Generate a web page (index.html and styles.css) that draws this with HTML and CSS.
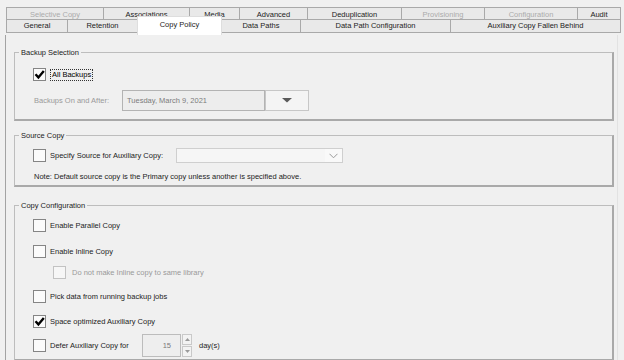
FILE: index.html
```html
<!DOCTYPE html>
<html lang="en">
<head>
    <meta charset="UTF-8">
    <title>Copy Policy</title>
    <link rel="stylesheet" href="styles.css">
</head>
<body>
    <div class="tabs">
        <div class="tab-row back">
            <div class="tab off t-selective">Selective Copy</div>
            <div class="tab t-assoc">Associations</div>
            <div class="tab t-media">Media</div>
            <div class="tab t-advanced">Advanced</div>
            <div class="tab t-dedup">Deduplication</div>
            <div class="tab off t-prov">Provisioning</div>
            <div class="tab off t-config">Configuration</div>
            <div class="tab t-audit">Audit</div>
        </div>
        <div class="tab-row front">
            <div class="tab t-general">General</div>
            <div class="tab t-retention">Retention</div>
            <div class="tab active t-policy">Copy Policy</div>
            <div class="tab t-paths">Data Paths</div>
            <div class="tab t-pathconf">Data Path Configuration</div>
            <div class="tab t-fallen">Auxiliary Copy Fallen Behind</div>
        </div>
    </div>

    <main class="panel">
        <fieldset class="group" id="backup-selection">
            <legend>Backup Selection</legend>
            <div class="group-body">
                <div class="row">
                    <span class="box">
                        <svg viewBox="0 0 13 13" width="13" height="13"><path d="M2.5 6.3 L5.4 9.4 L10.8 3" fill="none" stroke="#000" stroke-width="2.4"/></svg>
                    </span>
                    <span class="label focus">All Backups</span>
                </div>
                <div class="row second">
                    <span class="label muted date-label">Backups On and After:</span>
                    <span class="date-input">Tuesday, March 9, 2021</span>
                    <span class="date-btn">
                        <svg viewBox="0 0 10 5" width="10" height="5"><polygon points="0,0 10,0 5,4.5" fill="#5a5a5a"/></svg>
                    </span>
                </div>
            </div>
        </fieldset>

        <fieldset class="group" id="source-copy">
            <legend>Source Copy</legend>
            <div class="group-body">
                <div class="row">
                    <span class="box"></span>
                    <span class="label source-label">Specify Source for Auxiliary Copy:</span>
                    <span class="combo">
                        <span class="combo-arrow">
                            <svg viewBox="0 0 9 6" width="9" height="6"><path d="M0.5 0.8 L4.5 4.8 L8.5 0.8" fill="none" stroke="#9a9a9a" stroke-width="1"/></svg>
                        </span>
                    </span>
                </div>
                <div class="row note">Note: Default source copy is the Primary copy unless another is specified above.</div>
            </div>
        </fieldset>

        <fieldset class="group" id="copy-configuration">
            <legend>Copy Configuration</legend>
            <div class="group-body">
                <div class="row">
                    <span class="box"></span>
                    <span class="label">Enable Parallel Copy</span>
                </div>
                <div class="row r2">
                    <span class="box"></span>
                    <span class="label">Enable Inline Copy</span>
                </div>
                <div class="row sub">
                    <span class="box disabled"></span>
                    <span class="label muted">Do not make Inline copy to same library</span>
                </div>
                <div class="row r4">
                    <span class="box"></span>
                    <span class="label">Pick data from running backup jobs</span>
                </div>
                <div class="row r5">
                    <span class="box">
                        <svg viewBox="0 0 13 13" width="13" height="13"><path d="M2.5 6.3 L5.4 9.4 L10.8 3" fill="none" stroke="#000" stroke-width="2.4"/></svg>
                    </span>
                    <span class="label">Space optimized Auxiliary Copy</span>
                </div>
                <div class="row r6">
                    <span class="box"></span>
                    <span class="label defer-label">Defer Auxiliary Copy for</span>
                    <span class="spin-input">15</span>
                    <span class="spin-btns">
                        <span class="spin-btn"><svg viewBox="0 0 5 3" width="5" height="3"><polygon points="0,3 5,3 2.5,0" fill="#9a9a9a"/></svg></span>
                        <span class="spin-btn"><svg viewBox="0 0 5 3" width="5" height="3"><polygon points="0,0 5,0 2.5,3" fill="#9a9a9a"/></svg></span>
                    </span>
                    <span class="label days">day(s)</span>
                </div>
            </div>
        </fieldset>
    </main>
</body>
</html>
```

FILE: styles.css
```css
body {
    margin: 0;
    height: 360px;
    overflow: hidden;
    background-color: #f0f0f0;
    font-family: "Liberation Sans", Arial, sans-serif;
    font-size: 7.5px;
    color: #1c1c1c;
}

/* tab strip */
.tabs {
    padding: 7px 0 0 6px;
}

.tab-row {
    display: flex;
    align-items: flex-start;
}

.tab {
    box-sizing: border-box;
    margin-left: -1px;
    border: 1px solid #a9a9a9;
    background-color: #e9e9e9;
    text-align: center;
    white-space: nowrap;
    overflow: hidden;
}

.tab:first-child {
    margin-left: 0;
}

.back .tab {
    height: 12px;
    padding-top: 1px;
    border-bottom: none;
    line-height: 12px;
}

.front .tab {
    height: 14px;
    line-height: 12px;
}

.tab.off {
    color: #ababab;
}

.tab.active {
    position: relative;
    z-index: 1;
    height: 19px;
    margin-top: -3px;
    border-color: #dedede;
    border-bottom: none;
    background-color: #ffffff;
    line-height: 15px;
}

.t-selective { width: 98px; }
.t-assoc { width: 87px; }
.t-media { width: 51px; }
.t-advanced { width: 69px; }
.t-dedup { width: 95px; }
.t-prov { width: 84px; }
.t-config { width: 94px; }
.t-audit { width: 44px; }

.t-general { width: 62px; }
.t-retention { width: 71px; }
.t-policy { width: 85px; }
.t-paths { width: 80px; }
.t-pathconf { width: 151px; }
.t-fallen { width: 171px; }

/* page body */
.panel {
    display: block;
    box-sizing: border-box;
    width: 613px;
    height: 327px;
    margin-left: 5px;
    padding: 12px 0 0 8px;
    border-left: 1px solid #a3a3a3;
    border-right: 1px solid #e2e2e2;
}

.group {
    box-sizing: border-box;
    width: 600px;
    margin: 0;
    padding: 0;
    border: 1px solid #bdbdbd;
    border-right: 2px solid #a9a9a9;
    border-bottom: 2px solid #a9a9a9;
}

.group legend {
    margin-left: 4px;
    padding: 0 2px;
    line-height: 11px;
    color: #1c1c1c;
}

.group-body {
    display: flex;
    flex-direction: column;
    padding-left: 18px;
}

#backup-selection .group-body {
    padding-top: 6px;
    padding-bottom: 8px;
}

#source-copy {
    margin-top: 9px;
}

#source-copy .group-body {
    padding-top: 4px;
    padding-bottom: 2px;
}

#copy-configuration {
    margin-top: 13px;
}

#copy-configuration .group-body {
    padding-top: 4px;
    padding-bottom: 2px;
}

.row {
    display: flex;
    align-items: center;
    height: 21px;
}

.row.second { margin-top: 5px; }
.row.r2 { margin-top: 5px; }
.row.sub { padding-left: 20px; }
.row.r4 { margin-top: 3px; }
.row.r5 { margin-top: 4px; }
.row.r6 { margin-top: 2px; height: 23px; }

.row.note {
    height: 14px;
    margin-top: 3px;
    padding-left: 1px;
}

/* checkboxes */
.box {
    box-sizing: border-box;
    display: flex;
    flex: none;
    width: 13px;
    height: 13px;
    border: 1px solid #858585;
    background-color: #fbfbfb;
}

.box svg {
    margin: -1px;
}

.box.disabled {
    border-color: #c2c2c2;
    background-color: #f6f6f6;
}

.row.sub .label {
    margin-left: 6px;
}

.label {
    margin-left: 4px;
    white-space: nowrap;
}

.muted {
    color: #9a9a9a;
}

.focus {
    padding: 0 1px;
    line-height: 10px;
    border: 1px dotted #333;
    color: #000;
}

/* date picker */
.date-label {
    width: 88px;
    margin-left: 1px;
}

.date-input {
    box-sizing: border-box;
    width: 143px;
    height: 21px;
    padding-left: 4px;
    border: 1px solid #b3b3b3;
    background-color: #ededed;
    color: #7c7c7c;
    line-height: 19px;
}

.date-btn {
    box-sizing: border-box;
    display: flex;
    align-items: center;
    justify-content: center;
    width: 44px;
    height: 21px;
    border: 1px solid #c7c7c7;
    background-color: #f4f4f4;
}

/* combo */
.source-label {
    width: 126px;
}

.combo {
    box-sizing: border-box;
    display: flex;
    justify-content: flex-end;
    width: 167px;
    height: 15px;
    border: 1px solid #cfcfcf;
    background-color: #f6f6f6;
}

.combo-arrow {
    display: flex;
    align-items: center;
    justify-content: center;
    width: 17px;
    background-color: #f9f9f9;
}

/* spinner */
.defer-label {
    width: 92px;
}

.spin-input {
    box-sizing: border-box;
    width: 39px;
    height: 23px;
    padding-right: 9px;
    border: 1px solid #bcbcbc;
    background-color: #eeeeee;
    color: #7a7a7a;
    text-align: right;
    line-height: 21px;
}

.spin-btns {
    display: flex;
    flex-direction: column;
    margin-left: 1px;
}

.spin-btn {
    box-sizing: border-box;
    display: flex;
    align-items: center;
    justify-content: center;
    width: 10px;
    height: 11px;
    border: 1px solid #c9c9c9;
    background-color: #f3f3f3;
}

.spin-btn + .spin-btn {
    margin-top: 1px;
}

.days {
    margin-left: 7px;
}
```
